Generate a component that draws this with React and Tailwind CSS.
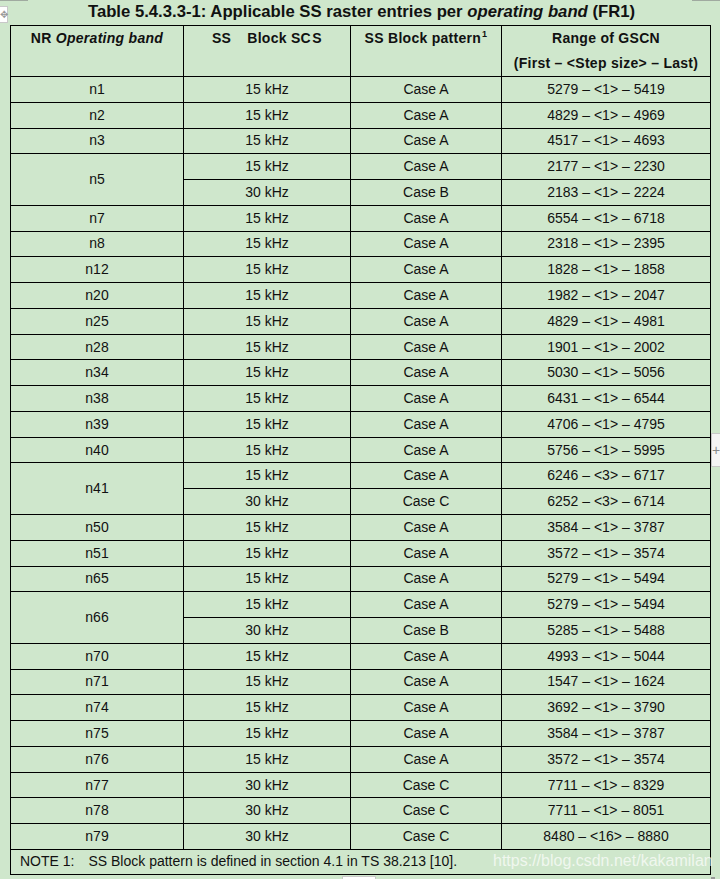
import React from 'react';

const rows = [
  ['n1', [['15 kHz', 'Case A', '5279 – <1> – 5419']]],
  ['n2', [['15 kHz', 'Case A', '4829 – <1> – 4969']]],
  ['n3', [['15 kHz', 'Case A', '4517 – <1> – 4693']]],
  ['n5', [['15 kHz', 'Case A', '2177 – <1> – 2230'], ['30 kHz', 'Case B', '2183 – <1> – 2224']]],
  ['n7', [['15 kHz', 'Case A', '6554 – <1> – 6718']]],
  ['n8', [['15 kHz', 'Case A', '2318 – <1> – 2395']]],
  ['n12', [['15 kHz', 'Case A', '1828 – <1> – 1858']]],
  ['n20', [['15 kHz', 'Case A', '1982 – <1> – 2047']]],
  ['n25', [['15 kHz', 'Case A', '4829 – <1> – 4981']]],
  ['n28', [['15 kHz', 'Case A', '1901 – <1> – 2002']]],
  ['n34', [['15 kHz', 'Case A', '5030 – <1> – 5056']]],
  ['n38', [['15 kHz', 'Case A', '6431 – <1> – 6544']]],
  ['n39', [['15 kHz', 'Case A', '4706 – <1> – 4795']]],
  ['n40', [['15 kHz', 'Case A', '5756 – <1> – 5995']]],
  ['n41', [['15 kHz', 'Case A', '6246 – <3> – 6717'], ['30 kHz', 'Case C', '6252 – <3> – 6714']]],
  ['n50', [['15 kHz', 'Case A', '3584 – <1> – 3787']]],
  ['n51', [['15 kHz', 'Case A', '3572 – <1> – 3574']]],
  ['n65', [['15 kHz', 'Case A', '5279 – <1> – 5494']]],
  ['n66', [['15 kHz', 'Case A', '5279 – <1> – 5494'], ['30 kHz', 'Case B', '5285 – <1> – 5488']]],
  ['n70', [['15 kHz', 'Case A', '4993 – <1> – 5044']]],
  ['n71', [['15 kHz', 'Case A', '1547 – <1> – 1624']]],
  ['n74', [['15 kHz', 'Case A', '3692 – <1> – 3790']]],
  ['n75', [['15 kHz', 'Case A', '3584 – <1> – 3787']]],
  ['n76', [['15 kHz', 'Case A', '3572 – <1> – 3574']]],
  ['n77', [['30 kHz', 'Case C', '7711 – <1> – 8329']]],
  ['n78', [['30 kHz', 'Case C', '7711 – <1> – 8051']]],
  ['n79', [['30 kHz', 'Case C', '8480 – <16> – 8880']]],
];

const td = 'border border-black text-center align-middle p-0';

export default function App() {
  return (
    <div className="relative w-[720px] h-[879px] bg-[#cfe7cc] text-[#111] font-['Liberation_Sans',Arial,sans-serif] overflow-hidden">
      <h1 className="h-[25px] text-center text-[16.7px] font-bold leading-[24px] pl-[3px]">
        Table 5.4.3.3-1: Applicable SS raster entries per <i>operating band</i> (FR1)
      </h1>

      <table className="ml-[10px] w-[700px] table-fixed border-collapse text-[14px]">
        <colgroup>
          <col className="w-[173px]" />
          <col className="w-[167px]" />
          <col className="w-[151px]" />
          <col className="w-[209px]" />
        </colgroup>
        <thead>
          <tr className="h-[51px] font-bold tracking-[0.02em]">
            <th className="border border-black align-top p-0 leading-[25px]">
              NR <i>Operating band</i>
            </th>
            <th className="border border-black align-top p-0 leading-[25px]">
              SS<span className="ml-[16px]">Block S<span className="tracking-[0.12em]">C</span>S</span>
            </th>
            <th className="border border-black align-top p-0 leading-[25px]">
              SS Block pattern<sup className="text-[9px] font-bold relative -top-[6px] ml-[1px]">1</sup>
            </th>
            <th className="border border-black align-top p-0 leading-[25px]">
              <div>Range of GSCN</div>
              <div>(First – &lt;Step size&gt; – Last)</div>
            </th>
          </tr>
        </thead>
        <tbody>
          {rows.map(([band, subs]) =>
            subs.map((s, i) => (
              <tr key={band + i} className="h-[25.77px]">
                {i === 0 && (
                  <td rowSpan={subs.length} className={td}>
                    {band}
                  </td>
                )}
                <td className={td}>{s[0]}</td>
                <td className={td}>{s[1]}</td>
                <td className={td}>{s[2]}</td>
              </tr>
            ))
          )}
          <tr className="h-[25px]">
            <td colSpan={4} className="border border-black text-left align-middle p-0 pl-[9px]">
              NOTE 1:<span className="ml-[14px]">SS Block pattern is defined in section 4.1 in TS 38.213 [10].</span>
            </td>
          </tr>
        </tbody>
      </table>

      {/* watermark */}
      <div className="absolute left-[493px] top-[851px] text-[16px] leading-[20px] text-white/70 whitespace-nowrap">
        https://blog.csdn.net/kakamilan
      </div>

      {/* editor artifacts */}
      <div className="absolute left-0 top-0 w-[28px] h-[1px] bg-[#a0aaa0]" />
      <div className="absolute left-[692px] top-0 w-[28px] h-[1px] bg-[#a0aaa0]" />
      <div className="absolute left-0 top-[6px] w-[8px] h-[17px] bg-white border-y border-r border-[#c8c8c8] flex items-center justify-center text-[10px] leading-none text-[#999]">
        ✥
      </div>
      <div className="absolute left-[711px] top-[433px] w-[9px] h-[34px] bg-[#f4f4f4] border-l border-y border-[#c8c8c8] flex items-center justify-center text-[14px] leading-none text-[#888]">
        +
      </div>
      <div className="absolute left-[342px] top-[876px] w-[34px] h-[3px] bg-white border-t border-x border-[#c8c8c8]" />
      <div className="absolute left-[711px] top-[877px] w-[4px] h-[2px] bg-[#999]" />
    </div>
  );
}
